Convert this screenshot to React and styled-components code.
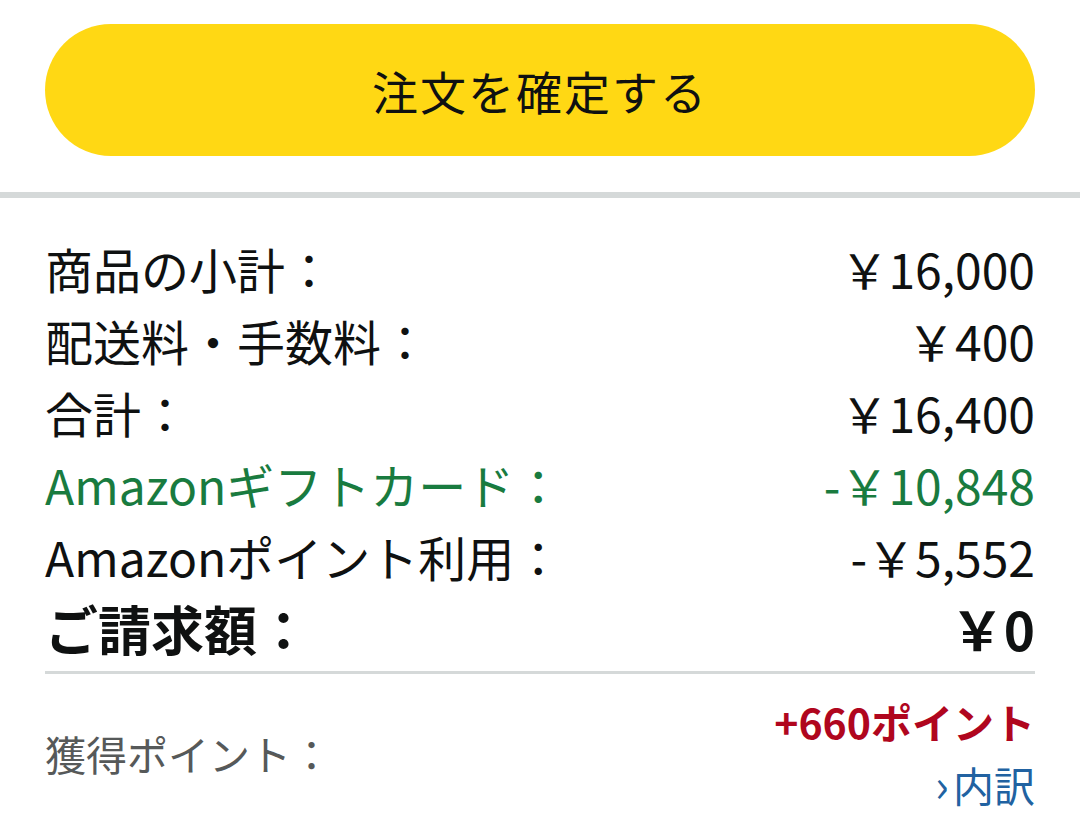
import React from 'react';
import styled, { createGlobalStyle } from 'styled-components';

const GlobalStyle = createGlobalStyle`
  body {
    margin: 0;
    background: #fff;
    font-family: "Noto Sans CJK JP", "Noto Sans", sans-serif;
    color: #0f1111;
  }
`

const Page = styled.div`
  width: 1080px;
  background: #fff;
`

const ButtonArea = styled.div`
  padding: 24px 45px 36px;
`

const PlaceOrder = styled.button`
  display: flex;
  align-items: center;
  justify-content: center;
  width: 100%;
  height: 132px;
  border: none;
  border-radius: 66px;
  background: #ffd814;
  color: #0f1111;
  font-family: inherit;
  font-size: 46px;
  letter-spacing: 2px;
  padding: 0;
`

const Band = styled.div`
  height: 6px;
  background: #d5d9d9;
`

const Summary = styled.div`
  padding: 34px 45px 0;
`

const Row = styled.div`
  display: flex;
  justify-content: space-between;
  align-items: center;
  height: 72px;
  font-size: ${p => (p.$bold ? '53px' : '48px')};
  font-weight: ${p => (p.$bold ? 700 : 400)};
  color: ${p => p.$color || '#0f1111'};
`

const Rule = styled.hr`
  margin: 7px 0 0;
  border: none;
  height: 3px;
  background: #d5d9d9;
`

const Points = styled.div`
  display: flex;
  justify-content: space-between;
  align-items: center;
  padding-top: 16px;
`

const PointsLabel = styled.div`
  font-size: 41px;
  color: #565959;
`

const PointsRight = styled.div`
  display: flex;
  flex-direction: column;
  align-items: flex-end;
  font-size: 41px;
  line-height: 63px;
`

const Earned = styled.div`
  color: #b0061e;
  font-weight: 700;
`

const Breakdown = styled.a`
  display: flex;
  align-items: center;
  gap: 4px;
  color: #2162a1;
  text-decoration: none;
`

const Chevron = styled.span`
  font-size: 46px;
  line-height: 1;
  margin-top: -6px;
`

const rows = [
  { label: '商品の小計：', value: '￥16,000' },
  { label: '配送料・手数料：', value: '￥400' },
  { label: '合計：', value: '￥16,400' },
  { label: 'Amazonギフトカード：', value: '-￥10,848', color: '#197b3f' },
  { label: 'Amazonポイント利用：', value: '-￥5,552' },
  { label: 'ご請求額：', value: '￥0', bold: true },
]

export default function App() {
  return (
    <Page>
      <GlobalStyle />
      <ButtonArea>
        <PlaceOrder>注文を確定する</PlaceOrder>
      </ButtonArea>
      <Band />
      <Summary>
        {rows.map(r => (
          <Row key={r.label} $color={r.color} $bold={r.bold}>
            <span>{r.label}</span>
            <span>{r.value}</span>
          </Row>
        ))}
        <Rule />
        <Points>
          <PointsLabel>獲得ポイント：</PointsLabel>
          <PointsRight>
            <Earned>+660ポイント</Earned>
            <Breakdown href="#">
              <Chevron>›</Chevron>
              内訳
            </Breakdown>
          </PointsRight>
        </Points>
      </Summary>
    </Page>
  )
}
